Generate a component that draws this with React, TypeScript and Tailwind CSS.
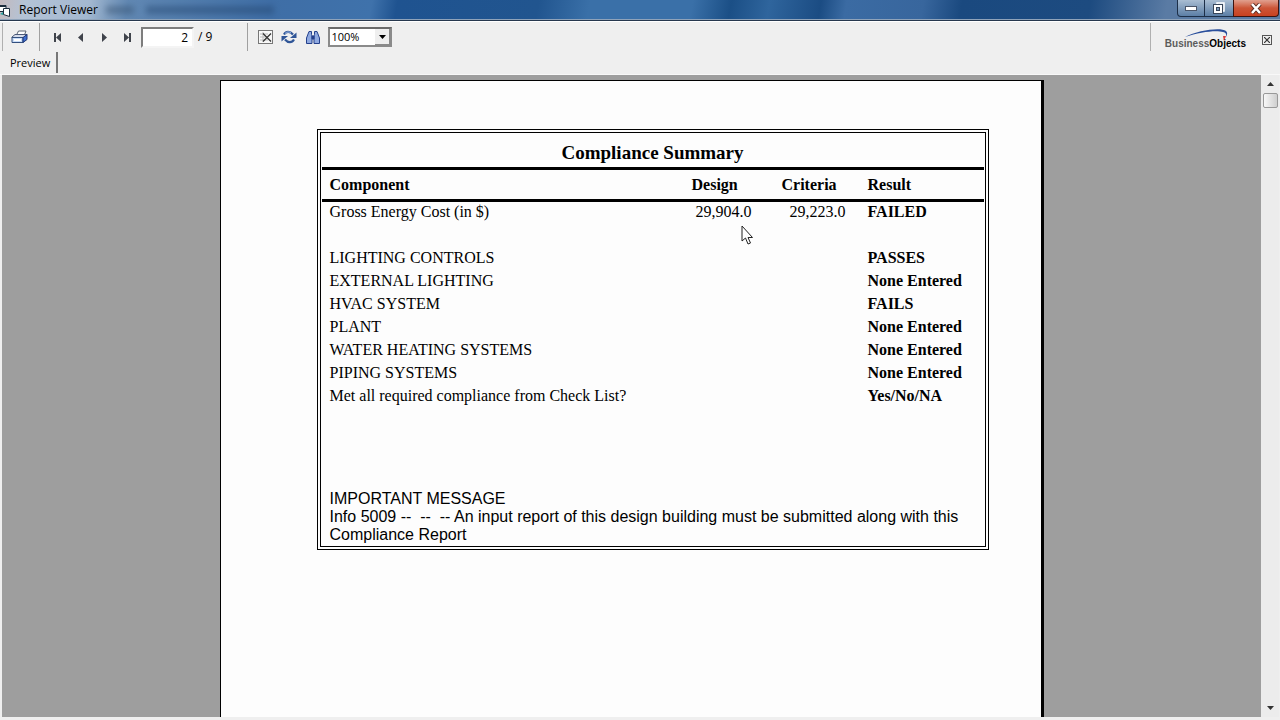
import type { ReactNode } from 'react';

const rows = [
  { name: 'LIGHTING CONTROLS', result: 'PASSES' },
  { name: 'EXTERNAL LIGHTING', result: 'None Entered' },
  { name: 'HVAC SYSTEM', result: 'FAILS' },
  { name: 'PLANT', result: 'None Entered' },
  { name: 'WATER HEATING SYSTEMS', result: 'None Entered' },
  { name: 'PIPING SYSTEMS', result: 'None Entered' },
  { name: 'Met all required compliance from Check List?', result: 'Yes/No/NA' },
];

function ToolButton({ label, children }: { label: string; children: ReactNode }) {
  return (
    <button type="button" aria-label={label} className="flex h-6 w-6 shrink-0 items-center justify-center">
      {children}
    </button>
  );
}

function PageButton({ label, children }: { label: string; children: ReactNode }) {
  return (
    <button type="button" aria-label={label} className="flex h-6 w-[23px] shrink-0 items-center justify-center">
      {children}
    </button>
  );
}

function TitleBar() {
  return (
    <header className="flex h-[21px] shrink-0 items-start justify-between border-b border-[#27384e] bg-[linear-gradient(100deg,#c3b9bd_0%,#b4c3d6_2%,#a3b8d0_7%,#6188b3_10%,#3f6ea6_21%,#3f72ab_29%,#1f5390_31%,#21558f_42%,#3a70a8_46%,#3a70a8_54%,#1b4f86_57%,#2f659d_60%,#1b4c83_64%,#3b6ba3_66%,#38669d_72%,#1a497f_75%,#1d4b80_85%,#5a7ba4_91%,#5a7ba4_100%)] shadow-[inset_0_-1px_0_#8fa3ba]">
      <div className="flex h-5 items-center gap-2">
        <svg width="11" height="13" viewBox="0 0 11 13" aria-hidden="true">
          <path d="M0 1.500h6v6H0" fill="#fff" stroke="#1b2c3c" />
          <path d="M0 2h6" stroke="#1b2c3c" strokeWidth="2" />
          <path d="M3.500 4.500h6v8l-6-2z" fill="#fff" stroke="#1b2c3c" />
          <path d="M0 10l3-2v3z" fill="#2aa5a0" />
        </svg>
        <h1 className="text-xs text-black">Report Viewer</h1>
        <div className="flex gap-3 opacity-50 blur-[3px]">
          <div className="h-2 w-7 bg-[#35506f]" />
          <div className="h-2 w-32 bg-[#24466f]" />
        </div>
      </div>
      <div className="flex h-[17px] pr-px">
        <button type="button" aria-label="Minimize" className="flex w-7 items-center justify-center rounded-bl border border-t-0 border-[#1d2f48] bg-linear-to-b from-[#a9bdd2] to-[#5c7fa6]">
          <svg width="12" height="5" viewBox="0 0 12 5"><rect x="0.5" y="0.5" width="11" height="4" fill="#fff" stroke="#4a5568" /></svg>
        </button>
        <button type="button" aria-label="Restore" className="flex w-7 items-center justify-center border-b border-[#1d2f48] bg-linear-to-b from-[#a9bdd2] to-[#5c7fa6]">
          <svg width="12" height="12" viewBox="0 0 12 12" fill="none">
            <path d="M4 3V1h7v8H9" stroke="#fff" strokeWidth="1.500" />
            <rect x="2" y="4" width="6" height="6" stroke="#fff" strokeWidth="2" />
            <rect x="0.500" y="2.500" width="9" height="9" stroke="#38465a" />
            <rect x="3.500" y="5.500" width="3" height="3" stroke="#38465a" />
          </svg>
        </button>
        <button type="button" aria-label="Close" className="flex w-[46px] items-center justify-center rounded-br border border-t-0 border-[#3d1410] bg-linear-to-b from-[#e0a08f] via-[#cc5537] to-[#c9411f]">
          <svg width="14" height="11" viewBox="0 0 14 11">
            <path d="M3 1l8 9M11 1l-8 9" stroke="#5a2a20" strokeWidth="4.200" />
            <path d="M3 1l8 9M11 1l-8 9" stroke="#fff" strokeWidth="2.600" />
          </svg>
        </button>
      </div>
    </header>
  );
}

function Toolbar() {
  return (
    <div className="flex h-[31px] shrink-0 items-center border-t border-white pl-[2px] pr-1">
      <div className="mr-1 h-7 w-px bg-[#b0b0b0]" />
      <ToolButton label="Print">
        <svg width="17" height="14" viewBox="0 0 17 14" strokeLinejoin="round">
          <path d="M5 6l2.500-5H15l-2 5z" fill="#fff" stroke="#5a6472" />
          <path d="M1 7l3-2.500h12L13 8H1z" fill="#d5dceb" stroke="#4c5a78" />
          <path d="M1 7.500h11v5H1z" fill="#c8dcf8" stroke="#34507f" />
          <path d="M12 7.500l4-3v5l-4 3z" fill="#3f6fd0" stroke="#1d3575" />
          <path d="M3 10h7" stroke="#fff" strokeWidth="2" />
        </svg>
      </ToolButton>
      <div className="ml-2 mr-[6px] h-7 w-px bg-[#a0a0a0]" />
      <div className="flex">
        <PageButton label="First page">
          <svg width="8" height="9" viewBox="0 0 8 9" fill="#3f434b"><path d="M0 0h2v9H0zM7 0v9L2 4.500z" /></svg>
        </PageButton>
        <PageButton label="Previous page">
          <svg width="6" height="9" viewBox="0 0 6 9" fill="#3f434b"><path d="M5 0v9L0 4.500z" /></svg>
        </PageButton>
        <PageButton label="Next page">
          <svg width="6" height="9" viewBox="0 0 6 9" fill="#3f434b"><path d="M1 0v9l5-4.500z" /></svg>
        </PageButton>
        <PageButton label="Last page">
          <svg width="8" height="9" viewBox="0 0 8 9" fill="#3f434b"><path d="M6 0h2v9H6zM1 0v9l5-4.500z" /></svg>
        </PageButton>
      </div>
      <input aria-label="Page number" defaultValue="2" className="ml-[3px] h-[21px] w-[53px] border-2 border-[#f4f4f4] border-l-[#7d7d7d] border-t-[#7d7d7d] bg-white pr-1 text-right text-xs text-black" />
      <span className="ml-1 text-xs text-black">/ 9</span>
      <div className="ml-[35px] mr-[5px] h-7 w-px bg-[#a0a0a0]" />
      <ToolButton label="Stop loading">
        <svg width="15" height="14" viewBox="0 0 15 14" fill="none">
          <rect x="0.500" y="0.500" width="14" height="13" fill="#f8f8f8" stroke="#777" />
          <path d="M2 4h8M2 7h8M2 10h8M5 2v10" stroke="#bbb" />
          <path d="M5 3.500l8 8M13 3.500l-8 8" stroke="#333" strokeWidth="1.300" />
        </svg>
      </ToolButton>
      <ToolButton label="Refresh">
        <svg width="16" height="14" viewBox="0 0 16 14" fill="none">
          <path d="M3 4.500C5 1 9 1 12 4.500M13 9.500c-2 3.500-6 3.500-9 0" stroke="#2f5597" strokeWidth="2.200" />
          <path d="M15.500 2.500V8H9z" fill="#2f5597" />
          <path d="M.5 11.500V6H7z" fill="#2f5597" />
          <path d="M4 3.500c2-2 4-2 6-.5" stroke="#9cb9e8" />
        </svg>
      </ToolButton>
      <ToolButton label="Search text">
        <svg width="14" height="14" viewBox="0 0 14 14" fill="#8fa9e0" stroke="#24408c">
          <path d="M3 1.500h2.500v3L6 6v7.500H.5V8z" />
          <path d="M11 1.500H8.500v3L8 6v7.500h5.500V8z" />
          <path d="M6 6h2v3H6z" fill="#24408c" />
        </svg>
      </ToolButton>
      <div className="relative ml-[3px] h-5 w-16 border-2 border-[#8a8a8a] border-t-[#6a6a6a] bg-white">
        <select aria-label="Zoom" className="block h-4 w-full appearance-none bg-transparent pl-px text-[11px] leading-4 text-black">
          <option>100%</option>
        </select>
        <span className="pointer-events-none absolute right-0 top-0 flex h-4 w-[15px] items-center justify-center border-b border-r border-[#8a8a8a] bg-[#efefef]">
          <svg width="7" height="4" viewBox="0 0 7 4"><path d="M0 0h7L3.500 4z" fill="#000" /></svg>
        </span>
      </div>
      <div className="ml-auto h-7 w-px bg-[#b0b0b0]" />
      <div className="flex items-center gap-4 pl-[14px] pr-1 pt-[6px]">
        <div className="relative flex h-6 items-center pt-2 font-['Liberation_Sans',sans-serif] text-[10px] font-bold leading-3 text-black">
          <span className="text-[#5c5c5c]">Business</span>
          <span>Objects</span>
          <svg className="absolute left-5 top-0" width="44" height="18" viewBox="0 0 44 18">
            <path d="M0 9C13 2 36-1 41 3c2 2 1 4 0 6 0-2 1-4-3-5C31 2 15 4 0 9z" fill="#2a4f9c" />
            <path d="M38 8h3l-2 5z" fill="#d93a3a" />
          </svg>
        </div>
        <button type="button" aria-label="Close view" className="flex h-[10px] w-[10px] items-center justify-center border border-[#555]">
          <svg width="6" height="6" viewBox="0 0 6 6"><path d="M0 0l6 6M6 0L0 6" stroke="#333" strokeWidth="1.200" /></svg>
        </button>
      </div>
    </div>
  );
}

function Report() {
  return (
    <section className="relative w-[672px] border-4 border-double border-black px-px pb-[2px] text-black">
      <table className="w-full table-fixed border-separate border-spacing-0 text-left font-['Liberation_Serif',serif] text-base leading-5">
        <caption className="h-[37px] border-b-[3px] border-black pt-2 text-[19px] font-bold leading-6">
          Compliance Summary
        </caption>
        <colgroup>
          <col />
          <col className="w-[60px]" />
          <col className="w-[94px]" />
          <col className="w-[138px]" />
        </colgroup>
        <thead>
          <tr className="h-8">
            <th className="border-b-[3px] border-black pl-2">Component</th>
            <th className="border-b-[3px] border-black">Design</th>
            <th className="border-b-[3px] border-black pl-[30px]">Criteria</th>
            <th className="border-b-[3px] border-black pl-[22px]">Result</th>
          </tr>
        </thead>
        <tbody>
          <tr className="h-11 align-top">
            <td className="pl-2">Gross Energy Cost (in $)</td>
            <td className="text-right">29,904.0</td>
            <td className="text-right">29,223.0</td>
            <td className="pl-[22px] font-bold">FAILED</td>
          </tr>
          {rows.map((row) => (
            <tr key={row.name} className="h-[23px]">
              <td className="pl-2" colSpan={3}>{row.name}</td>
              <td className="pl-[22px] font-bold">{row.result}</td>
            </tr>
          ))}
        </tbody>
      </table>
      <div className="mt-[83px] pl-2 font-['Liberation_Sans',sans-serif] text-base leading-[18px]">
        <h2>IMPORTANT MESSAGE</h2>
        <p className="whitespace-pre-wrap">Info 5009 --  --  -- An input report of this design building must be submitted along with this Compliance Report</p>
      </div>
      <svg className="absolute left-[420px] top-[92px]" width="13" height="20" viewBox="0 0 13 20" aria-hidden="true">
        <path d="M1 1v15l3.500-3 2.500 6 2.500-1-2.500-5.500h4.500z" fill="#fff" stroke="#222" />
      </svg>
    </section>
  );
}

function ScrollBar() {
  return (
    <div className="flex w-[18px] shrink-0 flex-col items-center bg-[#ececec]">
      <button type="button" aria-label="Scroll up" className="flex h-[18px] w-full items-center justify-center">
        <svg width="7" height="4" viewBox="0 0 7 4"><path d="M0 4h7L3.500 0z" fill="#333" /></svg>
      </button>
      <div className="h-[15px] w-[15px] rounded-xs border border-[#999] bg-linear-to-r from-[#f8f8f8] to-[#cfcfcf]" />
      <button type="button" aria-label="Scroll down" className="mt-auto flex h-[18px] w-full items-center justify-center">
        <svg width="7" height="4" viewBox="0 0 7 4"><path d="M0 0h7L3.500 4z" fill="#333" /></svg>
      </button>
    </div>
  );
}

export default function App() {
  return (
    <div className="flex h-screen flex-col bg-[#efefef] font-['Open_Sans',sans-serif]">
      <TitleBar />
      <Toolbar />
      <nav className="flex h-[23px] shrink-0 items-start border-b border-[#f8f8f8] pl-[2px]">
        <button type="button" className="h-[21px] border-r-2 border-[#777] pl-2 pr-[6px] text-[11px] leading-5 text-black">
          Preview
        </button>
      </nav>
      <main className="flex min-h-0 flex-1 pb-[3px] pl-[2px] pr-px">
        <div className="flex min-w-0 flex-1 justify-center overflow-hidden bg-[#9e9e9e] pt-[5px]">
          <div className="min-h-full w-[824px] border-l border-r-[3px] border-t border-black bg-[#fdfdfd] pl-24 pt-12">
            <Report />
          </div>
        </div>
        <ScrollBar />
      </main>
    </div>
  );
}
